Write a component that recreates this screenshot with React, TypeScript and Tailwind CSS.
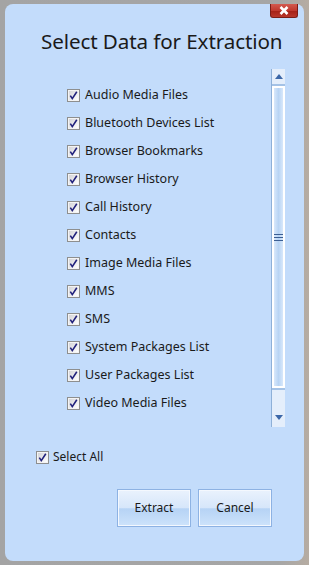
import React from 'react';

const items = [
  'Audio Media Files',
  'Bluetooth Devices List',
  'Browser Bookmarks',
  'Browser History',
  'Call History',
  'Contacts',
  'Image Media Files',
  'MMS',
  'SMS',
  'System Packages List',
  'User Packages List',
  'Video Media Files',
];

const CheckBox = () => (
  <svg width="13" height="13" viewBox="0 0 13 13" className="shrink-0">
    <defs>
      <linearGradient id="cbg" x1="0" y1="0" x2="1" y2="1">
        <stop offset="0" stopColor="#d4d4d8" />
        <stop offset="1" stopColor="#ffffff" />
      </linearGradient>
    </defs>
    <rect x="0.5" y="0.5" width="12" height="12" fill="#f4f4f4" stroke="#8e8f8f" />
    <rect x="2" y="2" width="9" height="9" fill="url(#cbg)" />
    <path d="M3.3 6.6 L5.3 9.6 L9.8 2.8" fill="none" stroke="#21217c" strokeWidth="1.6" />
  </svg>
);

const ScrollBar = () => (
  <div className="w-[14px] h-[358px] flex flex-col bg-[#dbe8f8] border-l border-[#8eb0d8]">
    <div className="h-[17px] flex items-center justify-center bg-[#e4eefb] border-b-2 border-[#a4c2e6]">
      <svg width="8" height="5" viewBox="0 0 8 5">
        <path d="M0 5 L4 0 L8 5 Z" fill="#3c67a8" />
      </svg>
    </div>
    <div className="flex-1 border-2 border-white bg-gradient-to-r from-[#d8e8fb] via-[#b8d4f4] to-[#d8e8fb] flex items-center justify-center">
      <div className="flex flex-col gap-[2px]">
        <div className="w-[9px] h-[1px] bg-[#3c5f93]" />
        <div className="w-[9px] h-[1px] bg-[#3c5f93]" />
        <div className="w-[9px] h-[1px] bg-[#3c5f93]" />
      </div>
    </div>
    <div className="h-[39px] flex items-end justify-center pb-[7px] bg-[#e4eefb] border-t-2 border-[#a4c2e6]">
      <svg width="8" height="5" viewBox="0 0 8 5">
        <path d="M0 0 L4 5 L8 0 Z" fill="#3c67a8" />
      </svg>
    </div>
  </div>
);

const DialogButton = ({ label }: { label: string }) => (
  <button className="w-[74px] h-[38px] border border-[#8db2e3] bg-[linear-gradient(#eaf2fd_0%,#d6e6fa_50%,#b6d3f5_52%,#cde3fb_100%)] text-[12px] text-[#1a1a1a] shadow-[inset_0_0_0_1px_#f4f8fe]">
    {label}
  </button>
);

export default function App() {
  return (
    <div className="w-[309px] h-[565px] bg-[linear-gradient(90deg,#a4a4a4_0%,#a6a6a6_90%,#b6aca2_100%)] pt-[4px] pl-[5px] font-['Noto_Sans','Open_Sans',sans-serif]">
      <div className="relative w-[299px] h-[557px] rounded-[8px] bg-[#c3dcfb] flex flex-col">
        <button className="absolute top-0 right-[6px] w-[28px] h-[14px] rounded-b-[3px] bg-[linear-gradient(#d35a4f_0%,#c0392e_50%,#a51f15_52%,#b8362a_100%)] border border-[#7a1c16] border-t-0 flex items-center justify-center">
          <svg width="10" height="9" viewBox="0 0 10 9">
            <path d="M1.5 1 L8.5 8 M8.5 1 L1.5 8" stroke="#ffffff" strokeWidth="2.6" />
          </svg>
        </button>

        <h1 className="mt-[25px] pl-[36px] text-[20.6px] leading-[25px] text-[#1a1a1a] tracking-[-0.1px]">
          Select Data for Extraction
        </h1>

        <div className="mt-[15px] flex pl-[62px] pr-[19px]">
          <div className="flex-1 pt-[12px] flex flex-col">
            {items.map((item) => (
              <div key={item} className="h-[28px] flex items-center gap-[5px]">
                <CheckBox />
                <span className="text-[12.5px] text-[#1a1a1a]">{item}</span>
              </div>
            ))}
          </div>
          <ScrollBar />
        </div>

        <div className="mt-[21px] pl-[31px] flex items-center gap-[4px]">
          <CheckBox />
          <span className="text-[12px] text-[#1a1a1a]">Select All</span>
        </div>

        <div className="mt-[23px] pr-[32px] flex justify-end gap-[7px]">
          <DialogButton label="Extract" />
          <DialogButton label="Cancel" />
        </div>
      </div>
    </div>
  );
}
